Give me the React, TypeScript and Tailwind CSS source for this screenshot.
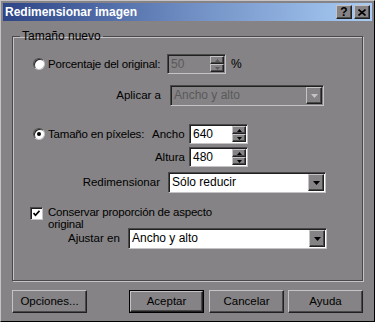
import type { ReactNode } from 'react'

const face = 'bg-[#858385]'
const raised =
  'border border-t-[#c6c3c6] border-l-[#c6c3c6] border-r-[#212021] border-b-[#212021] shadow-[inset_-1px_-1px_0_#4a494a]'
const sunken =
  'border border-t-[#4a494a] border-l-[#4a494a] border-r-[#c6c3c6] border-b-[#c6c3c6] shadow-[inset_1px_1px_0_#212021]'

function Tri({ color = '#000' }: { color?: string }) {
  return (
    <svg width="7" height="4" viewBox="0 0 7 4">
      <path d="M0 0h7L3.5 4z" fill={color} />
    </svg>
  )
}

function SpinBtn({ up, dim }: { up?: boolean; dim?: boolean }) {
  return (
    <div className={`flex h-[8px] w-[14px] items-center justify-center ${face} ${raised}`}>
      <svg width="5" height="3" viewBox="0 0 5 3" className={up ? 'rotate-180' : ''}>
        <path d="M0 0h5L2.5 3z" fill={dim ? '#5a595a' : '#000'} />
      </svg>
    </div>
  )
}

function Spin({ value, dim }: { value: string; dim?: boolean }) {
  return (
    <div className={`flex h-[20px] w-[59px] items-center ${dim ? face : 'bg-white'} ${sunken}`}>
      <span className={`flex-1 pl-[3px] text-[12px] ${dim ? 'text-[#5a595a]' : 'text-black'}`}>{value}</span>
      <div className="mr-[1px] flex flex-col">
        <SpinBtn up dim={dim} />
        <SpinBtn dim={dim} />
      </div>
    </div>
  )
}

function Combo({ value, width, dim }: { value: string; width: string; dim?: boolean }) {
  return (
    <div className={`flex h-[21px] shrink-0 items-center ${width} ${dim ? face : 'bg-white'} ${sunken}`}>
      <span className={`flex-1 pl-[3px] text-[12px] ${dim ? 'text-[#5a595a]' : 'text-black'}`}>{value}</span>
      <div className={`mr-[1px] flex h-[17px] w-[16px] items-center justify-center ${face} ${raised}`}>
        <Tri color={dim ? '#c6c3c6' : '#000'} />
      </div>
    </div>
  )
}

function Radio({ checked }: { checked?: boolean }) {
  return (
    <div className="flex h-[12px] w-[12px] items-center justify-center rounded-full border border-t-[#4a494a] border-l-[#4a494a] border-r-[#c6c3c6] border-b-[#c6c3c6] bg-white shadow-[inset_1px_1px_0_#212021]">
      {checked && <div className="h-[4px] w-[4px] rounded-full bg-black" />}
    </div>
  )
}

function Btn({ children, def }: { children: ReactNode; def?: boolean }) {
  return (
    <div className={def ? 'border border-black' : ''}>
      <div
        className={`flex items-center justify-center ${face} ${raised} ${
          def ? 'h-[21px] w-[73px]' : 'h-[23px] w-[75px]'
        }`}
      >
        {children}
      </div>
    </div>
  )
}

export default function App() {
  return (
    <div
      className={`flex h-[322px] w-[375px] flex-col ${face} border border-t-[#c6c3c6] border-l-[#c6c3c6] border-r-[#000] border-b-[#000] p-[2px] text-[11.5px] leading-[13px] whitespace-nowrap text-black`}
      style={{ fontFamily: '"Liberation Sans", Arial, sans-serif' }}
    >
      {/* title bar */}
      <div className="flex h-[18px] items-center bg-gradient-to-r from-[#2e4587] via-[#6f8dc2] to-[#a9cdf5] pl-[2px] pr-[2px]">
        <span className="flex-1 text-[12px] font-bold text-white">Redimensionar imagen</span>
        <div className={`flex h-[14px] w-[16px] items-center justify-center ${face} ${raised} text-[12px] font-bold leading-none`}>
          ?
        </div>
        <div className={`ml-[2px] flex h-[14px] w-[16px] items-center justify-center ${face} ${raised}`}>
          <svg width="8" height="7" viewBox="0 0 8 7">
            <path d="M0.5 0.5l7 6M7.5 0.5l-7 6" stroke="#000" strokeWidth="1.6" />
          </svg>
        </div>
      </div>

      <div className="flex flex-1 flex-col px-[9px] pt-[9px]">
        <fieldset className="h-[251px] border border-[#4a494a] shadow-[1px_1px_0_#c6c3c6,inset_1px_1px_0_#c6c3c6]">
          <legend className="ml-[7px] px-[2px] text-[12px]">Tamaño nuevo</legend>

          <div className="flex flex-col">
            <div className="mt-[11px] flex h-[20px] items-center">
              <div className="ml-[20px]"><Radio /></div>
              <span className="ml-[3px] w-[119px] shrink-0 tracking-[-0.2px]">Porcentaje del original:</span>
              <Spin value="50" dim />
              <span className="ml-[5px] text-[12px]">%</span>
            </div>

            <div className="mt-[11px] flex h-[21px] items-center">
              <span className="w-[157px] shrink-0 pr-[9px] text-right">Aplicar a</span>
              <Combo value="Ancho y alto" width="w-[154px]" dim />
            </div>

            <div className="mt-[18px] flex h-[20px] items-center">
              <div className="ml-[20px]"><Radio checked /></div>
              <span className="ml-[3px] w-[104px] shrink-0 tracking-[-0.2px]">Tamaño en píxeles:</span>
              <span className="w-[37px] shrink-0">Ancho</span>
              <Spin value="640" />
            </div>

            <div className="mt-[3px] flex h-[20px] items-center">
              <span className="w-[176px] shrink-0 pr-[4px] text-right">Altura</span>
              <Spin value="480" />
            </div>

            <div className="mt-[5px] flex h-[21px] items-center">
              <span className="w-[155px] shrink-0 pr-[8px] text-right">Redimensionar</span>
              <Combo value="Sólo reducir" width="w-[158px]" />
            </div>

            <div className="mt-[13px] flex items-start">
              <div className={`ml-[17px] mt-[1px] flex h-[13px] w-[13px] items-center justify-center bg-white ${sunken}`}>
                <svg width="7" height="7" viewBox="0 0 7 7">
                  <path d="M0.5 3l2 2.2L6.5 0.8" stroke="#000" strokeWidth="1.7" fill="none" />
                </svg>
              </div>
              <span className="ml-[5px] leading-[12px] tracking-[-0.2px]">
                Conservar proporción de aspecto
                <br />
                original
              </span>
            </div>

            <div className="mt-[-2px] flex h-[21px] items-center">
              <span className="ml-[55px] w-[60px] shrink-0">Ajustar en</span>
              <Combo value="Ancho y alto" width="w-[199px]" />
            </div>
          </div>
        </fieldset>

        <div className="mt-[9px] flex items-center">
          <Btn>Opciones...</Btn>
          <div className="ml-[42px]">
            <Btn def>Aceptar</Btn>
          </div>
          <div className="ml-[5px]">
            <Btn>Cancelar</Btn>
          </div>
          <div className="ml-[4px]">
            <Btn>Ayuda</Btn>
          </div>
        </div>
      </div>
    </div>
  )
}
